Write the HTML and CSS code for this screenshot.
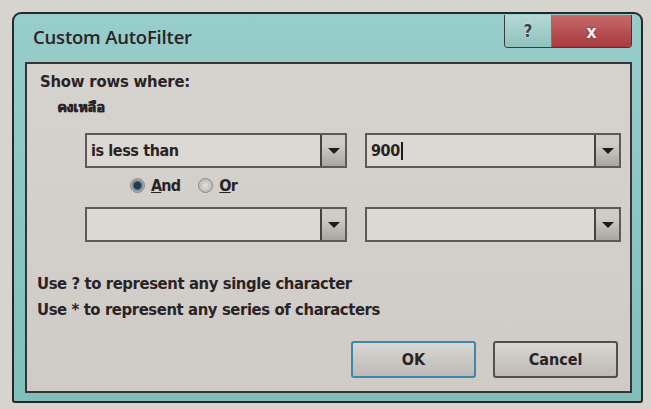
FILE: index.html
```html
<!DOCTYPE html>
<html lang="en">
<head>
  <meta charset="UTF-8">
  <title>Custom AutoFilter</title>
  <link rel="stylesheet" href="styles.css">
</head>
<body>
  <div class="dialog">
    <div class="titlebar">
      <span class="title">Custom AutoFilter</span>
      <div class="caption-buttons">
        <div class="cap-btn help">?</div>
        <div class="cap-btn close">x</div>
      </div>
    </div>
    <div class="content">
      <div class="label">Show rows where:</div>
      <div class="field-name">คงเหลือ</div>

      <div class="row first">
        <div class="combo op">
          <span class="value">is less than</span>
          <span class="arrow"><i></i></span>
        </div>
        <div class="combo val">
          <span class="value">900<b class="caret"></b></span>
          <span class="arrow"><i></i></span>
        </div>
      </div>

      <div class="radios">
        <label class="radio"><span class="dot checked"></span><span><u>A</u>nd</span></label>
        <label class="radio"><span class="dot"></span><span><u>O</u>r</span></label>
      </div>

      <div class="row second">
        <div class="combo op">
          <span class="value"></span>
          <span class="arrow"><i></i></span>
        </div>
        <div class="combo val">
          <span class="value"></span>
          <span class="arrow"><i></i></span>
        </div>
      </div>

      <div class="hints">
        <div>Use ? to represent any single character</div>
        <div>Use * to represent any series of characters</div>
      </div>

      <div class="buttons">
        <button class="btn default">OK</button>
        <button class="btn">Cancel</button>
      </div>
    </div>
  </div>
</body>
</html>
```

FILE: styles.css
```css
body {
  margin: 0;
  padding: 12px 0 0 12px;
  background-color: #d6d4cf;
  font-family: "DejaVu Sans Condensed", "DejaVu Sans", sans-serif;
  font-stretch: condensed;
  font-weight: bold;
  color: #2a2326;
}
.dialog {
  width: 627px;
  height: 387px;
  border: 2px solid #2a2727;
  border-radius: 9px 9px 3px 3px;
  background: linear-gradient(#97cdca, #80bfba);
  display: flex;
  flex-direction: column;
}
.titlebar {
  height: 48px;
  display: flex;
  justify-content: space-between;
  align-items: flex-start;
}
.title {
  font-family: "Open Sans", sans-serif;
  font-stretch: normal;
  font-weight: 600;
  font-size: 18.5px;
  margin: 10px 0 0 19px;
  letter-spacing: -0.2px;
}
.caption-buttons {
  display: flex;
  margin: 1px 9px 0 0;
  border: 1px solid #3d3a3a;
  border-top: none;
  border-radius: 0 0 4px 4px;
  overflow: hidden;
}
.cap-btn {
  height: 32px;
  display: flex;
  align-items: center;
  justify-content: center;
  font-family: "DejaVu Sans", sans-serif;
  font-weight: bold;
}
.help {
  width: 46px;
  background: linear-gradient(#b4d8d5, #8fc2be);
  font-size: 17px;
  color: #3b4546;
  text-shadow: 0 0 2px #eef4f3;
  border-right: 1px solid #6b7d7c;
}
.close {
  width: 79px;
  background: linear-gradient(#c86a6a, #a83a3e);
  font-size: 18px;
  color: #f4f0ee;
  text-shadow: 0 0 2px #333;
}
.content {
  flex: 1;
  margin: 0 9px 8px 11px;
  border: 2px solid #3a3535;
  background: linear-gradient(#d6d3cf, #cfccc8);
  padding: 8px 0 0 13px;
  font-size: 16px;
}
.label {
  line-height: 20px;
  font-size: 16.5px;
  letter-spacing: -0.2px;
}
.field-name {
  margin: 5px 0 0 17px;
  font-size: 14px;
  line-height: 20px;
  text-shadow: 0.5px 0 0 #2a2326;
}
.row {
  display: flex;
  gap: 18px;
  margin-left: 45px;
}
.row.first {
  margin-top: 16px;
}
.row.second {
  margin-top: 11px;
}
.combo {
  height: 31px;
  border: 2px solid #5e5957;
  background: #dcd9d4;
  display: flex;
  align-items: center;
}
.combo.op {
  width: 258px;
}
.combo.val {
  width: 252px;
}
.value {
  flex: 1;
  padding-left: 4px;
  font-size: 16px;
  letter-spacing: -0.4px;
  display: flex;
  align-items: center;
}
.caret {
  display: inline-block;
  width: 2px;
  height: 18px;
  margin-left: 1px;
  background: #1d1a1a;
}
.arrow {
  width: 23px;
  height: 31px;
  border-left: 2px solid #47413f;
  background: linear-gradient(#cfccc8 30%, #a9a6a2);
  display: flex;
  align-items: center;
  justify-content: center;
}
.arrow i {
  width: 0;
  height: 0;
  border-left: 6px solid transparent;
  border-right: 6px solid transparent;
  border-top: 6px solid #1f1b1b;
}
.radios {
  display: flex;
  gap: 18px;
  margin: 6px 0 0 90px;
  height: 22px;
  align-items: center;
}
.radio {
  display: flex;
  align-items: center;
  gap: 6px;
  font-size: 16px;
  letter-spacing: -0.8px;
}
.dot {
  width: 13px;
  height: 13px;
  border-radius: 50%;
  border: 1px solid #8b8886;
  background: radial-gradient(#e2e0dd, #aeaba8);
}
.dot.checked {
  background: radial-gradient(#1f3d55 35%, #5b7284 45%, #b9b6b3 70%);
}
.hints {
  margin: 29px 0 0 -3px;
  line-height: 26px;
  font-size: 16.5px;
  letter-spacing: -0.4px;
}
.buttons {
  display: flex;
  justify-content: flex-end;
  gap: 17px;
  margin: 18px 12px 0 0;
}
.btn {
  width: 125px;
  height: 37px;
  border: 2px solid #574d4b;
  border-radius: 3px;
  background: linear-gradient(#d9d7d3, #bdbab6);
  font-family: "DejaVu Sans Condensed", "DejaVu Sans", sans-serif;
  font-stretch: condensed;
  font-weight: bold;
  font-size: 16px;
  color: #2a2326;
}
.btn.default {
  border-color: #3f87a9;
}
```
